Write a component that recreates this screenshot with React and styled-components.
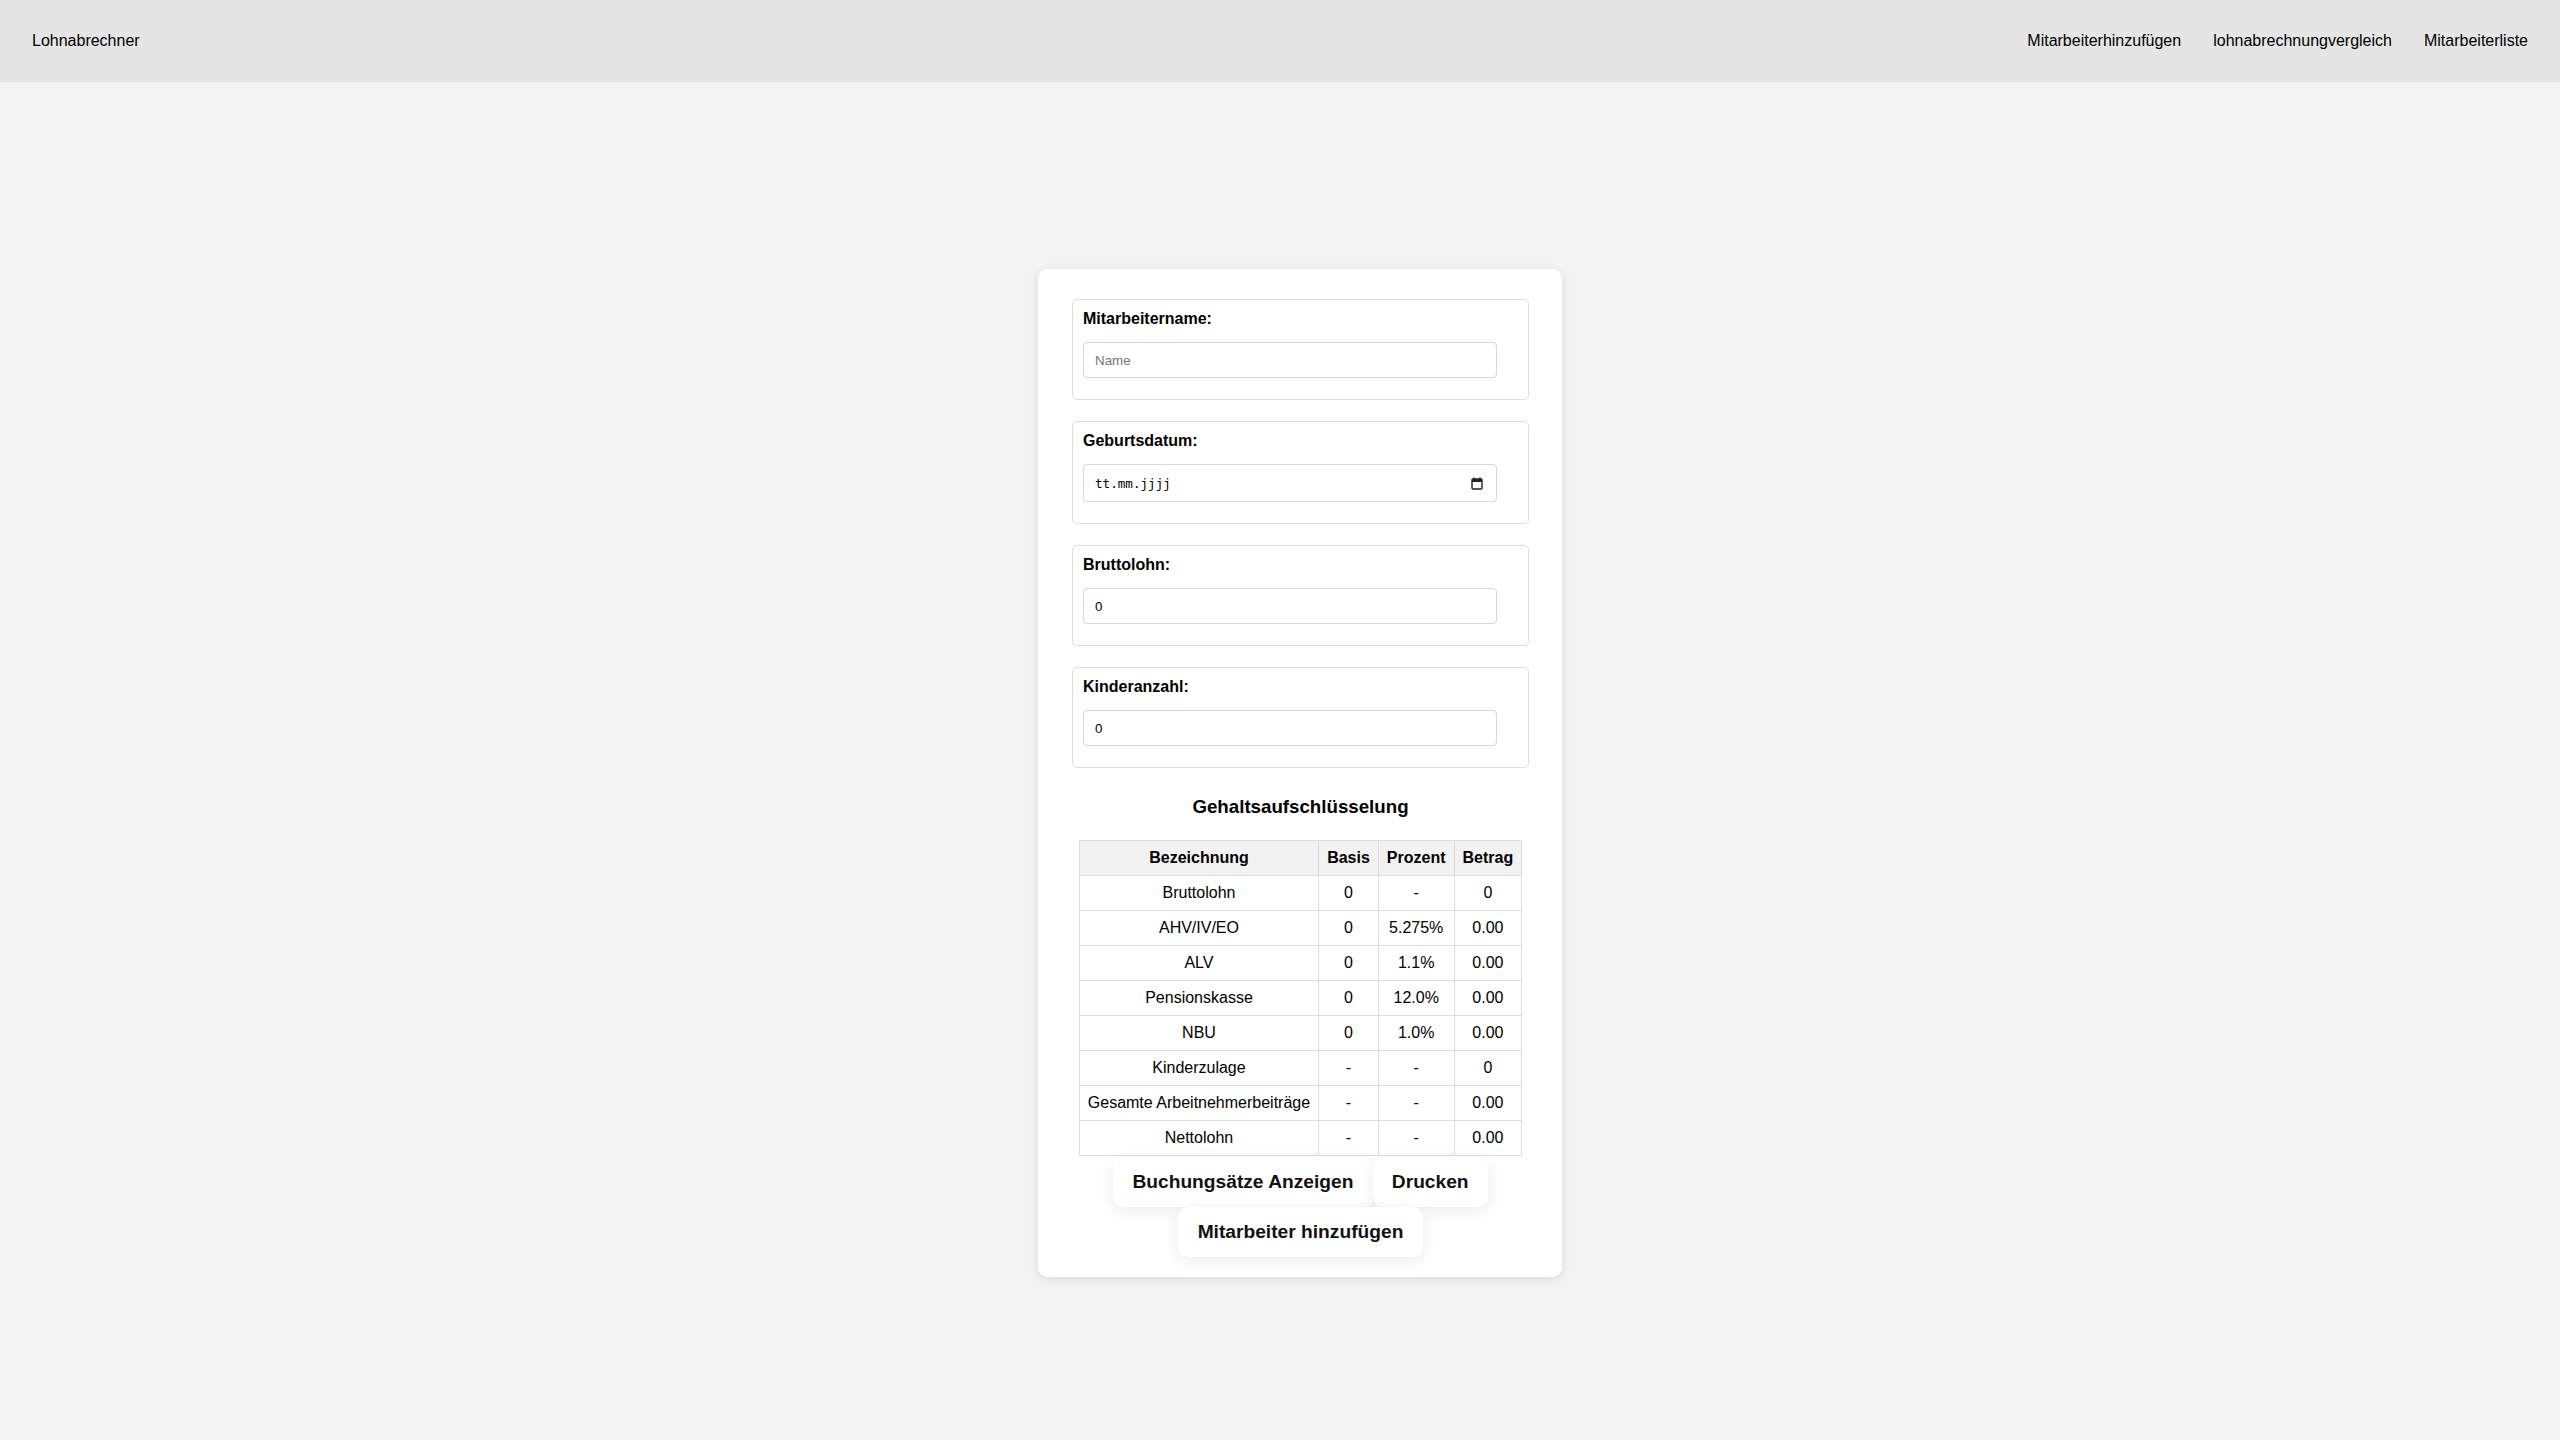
import React from "react";
import styled, { createGlobalStyle } from "styled-components";

const GlobalStyle = createGlobalStyle`
  body {
    margin: 0;
    background: #f3f3f3;
    font-family: "Liberation Sans", Arial, sans-serif;
    color: #000;
  }
`;

// top bar
const NavBar = styled.nav`
  height: 82px;
  padding: 0 32px;
  background: #e5e5e5;
  display: flex;
  align-items: center;
  justify-content: space-between;
  font-size: 16px;
`;

const NavLinks = styled.div`
  display: flex;
  gap: 32px;
`;

const NavLink = styled.a`
  color: #000;
  text-decoration: none;
  cursor: pointer;
`;

const Main = styled.main`
  display: flex;
  justify-content: center;
  padding: 187px 0 80px 40px;
`;

const Card = styled.div`
  width: 524px;
  box-sizing: border-box;
  padding: 30px 33px 20px 34px;
  background: #fff;
  border-radius: 10px;
  box-shadow: 0 2px 10px rgba(0, 0, 0, 0.1);
`;

const Group = styled.div`
  border: 1px solid #ddd;
  border-radius: 5px;
  padding: 10px 10px 21px;
  margin-bottom: 21px;
`;

const Label = styled.label`
  display: block;
  font-weight: bold;
  font-size: 16px;
  line-height: 18px;
  margin-bottom: 14px;
`;

const Input = styled.input`
  display: block;
  width: 414px;
  height: 36px;
  box-sizing: border-box;
  padding: 0 11px;
  border: 1px solid #d6d6d6;
  border-radius: 4px;
  font-family: "Liberation Sans", Arial, sans-serif;
  font-size: 13.33px;
  color: #000;
  outline: none;

  &::placeholder {
    color: #757575;
  }
`;

const DateBox = styled.div`
  display: flex;
  align-items: center;
  width: 414px;
  height: 38px;
  box-sizing: border-box;
  padding: 0 13px 0 11px;
  border: 1px solid #d6d6d6;
  border-radius: 4px;
`;

const DateText = styled.input`
  flex: 1;
  border: none;
  outline: none;
  padding: 0;
  font-family: "DejaVu Sans Mono", "Liberation Mono", monospace;
  font-size: 12.6px;
  color: #000;

  &::placeholder {
    color: #000;
  }
`;

const Heading = styled.h3`
  margin: 28px 0 22px;
  font-size: 18.72px;
  line-height: 21.5px;
  text-align: center;
`;

const Table = styled.table`
  margin: 0 auto;
  border-collapse: collapse;
  font-size: 16px;
  line-height: 18px;
`;

const Th = styled.th`
  border: 1px solid #ddd;
  padding: 8px;
  background: #f2f2f2;
  text-align: center;
`;

const Td = styled.td`
  border: 1px solid #ddd;
  padding: 8px;
  text-align: center;
  white-space: nowrap;
`;

const Actions = styled.div`
  display: flex;
  flex-wrap: wrap;
  justify-content: center;
  margin-top: 1px;
`;

const Button = styled.button`
  height: 50px;
  padding: 0 19.2px;
  border: none;
  border-radius: 10px;
  background: #fff;
  box-shadow: 0 4px 16px rgba(0, 0, 0, 0.08);
  font-family: "Liberation Sans", Arial, sans-serif;
  font-size: 19.2px;
  font-weight: bold;
  color: #111;
  cursor: pointer;
`;

const CalendarIcon = () => (
  <svg width="12" height="13" viewBox="0 0 12 13">
    <path d="M3 0.5v2M9 0.5v2" stroke="#222" strokeWidth="1.4" />
    <rect x="1" y="2" width="10" height="10" rx="1" fill="none" stroke="#222" strokeWidth="1.4" />
    <rect x="1" y="2" width="10" height="3" fill="#222" />
  </svg>
);

const rows = [
  ["Bruttolohn", "0", "-", "0"],
  ["AHV/IV/EO", "0", "5.275%", "0.00"],
  ["ALV", "0", "1.1%", "0.00"],
  ["Pensionskasse", "0", "12.0%", "0.00"],
  ["NBU", "0", "1.0%", "0.00"],
  ["Kinderzulage", "-", "-", "0"],
  ["Gesamte Arbeitnehmerbeiträge", "-", "-", "0.00"],
  ["Nettolohn", "-", "-", "0.00"],
];

export default function App() {
  return (
    <>
      <GlobalStyle />
      <NavBar>
        <NavLink>Lohnabrechner</NavLink>
        <NavLinks>
          <NavLink>Mitarbeiterhinzufügen</NavLink>
          <NavLink>lohnabrechnungvergleich</NavLink>
          <NavLink>Mitarbeiterliste</NavLink>
        </NavLinks>
      </NavBar>

      <Main>
        <Card>
          <Group>
            <Label>Mitarbeitername:</Label>
            <Input type="text" placeholder="Name" />
          </Group>
          <Group>
            <Label>Geburtsdatum:</Label>
            <DateBox>
              <DateText type="text" placeholder="tt.mm.jjjj" />
              <CalendarIcon />
            </DateBox>
          </Group>
          <Group>
            <Label>Bruttolohn:</Label>
            <Input type="number" defaultValue="0" />
          </Group>
          <Group>
            <Label>Kinderanzahl:</Label>
            <Input type="number" defaultValue="0" />
          </Group>

          <Heading>Gehaltsaufschlüsselung</Heading>
          <Table>
            <thead>
              <tr>
                <Th>Bezeichnung</Th>
                <Th>Basis</Th>
                <Th>Prozent</Th>
                <Th>Betrag</Th>
              </tr>
            </thead>
            <tbody>
              {rows.map((r) => (
                <tr key={r[0]}>
                  {r.map((c, i) => (
                    <Td key={i}>{c}</Td>
                  ))}
                </tr>
              ))}
            </tbody>
          </Table>

          <Actions>
            <Button>Buchungsätze Anzeigen</Button>
            <Button>Drucken</Button>
            <Button>Mitarbeiter hinzufügen</Button>
          </Actions>
        </Card>
      </Main>
    </>
  );
}
